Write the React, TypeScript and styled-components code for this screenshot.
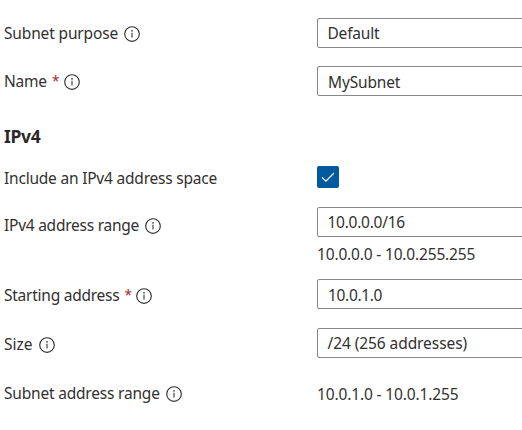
import React from "react";
import styled, { createGlobalStyle } from "styled-components";

const GlobalStyle = createGlobalStyle`
  *, *::before, *::after { box-sizing: border-box; }
  body {
    margin: 0;
    overflow: hidden;
    background: #fff;
    color: #323130;
    font: 15.5px/22px "Segoe UI", "Noto Sans", sans-serif;
  }
`;

const Form = styled.form`
  width: 522px;
  height: 430px;
  padding-top: 18px;
  overflow: hidden;
`;

const Row = styled.div<{ $gap?: number }>`
  display: grid;
  grid-template-columns: 313px 1fr;
  padding-left: 4px;
  margin-bottom: ${(p) => p.$gap ?? 18}px;
`;

const Label = styled.div<{ $height?: number; $drop?: number }>`
  display: flex;
  align-items: center;
  height: ${(p) => p.$height ?? 30}px;
  margin-top: ${(p) => p.$drop ?? 0}px;
  white-space: nowrap;
`;

const Text = styled.span<{ $tracking?: number }>`
  letter-spacing: ${(p) => p.$tracking ?? -0.2}px;
  white-space: nowrap;
`;

const Required = styled.span`
  width: 6px;
  margin-left: 5px;
  font-size: 13.5px;
  color: #a4262c;
`;

const InfoSvg = styled.svg`
  flex: none;
  width: 16px;
  height: 16px;
  margin: 1px 0 0 6px;
`;

const Heading = styled.h3`
  height: 24px;
  margin: -1px 0 18px;
  padding-left: 4px;
  font-size: 17.5px;
  font-weight: 700;
  line-height: 24px;
  letter-spacing: -0.3px;
  color: #292827;
`;

const TextField = styled.div`
  display: flex;
  align-items: center;
  width: 240px;
  height: 30px;
  padding: 1px 0 0 10px;
  border: 1px solid #8a8886;
  border-radius: 2px;
`;

const SelectField = styled(TextField)`
  padding: 0 0 1px 9.5px;
`;

const Note = styled.div`
  height: 24px;
  margin-top: 6px;
  line-height: 23px;
`;

const Value = styled.div`
  padding-top: 2px;
  line-height: 30px;
`;

const Checkbox = styled.div`
  display: grid;
  place-items: center;
  width: 22px;
  height: 22px;
  border-radius: 2px;
  background: #005a9e;
`;

const InfoIcon = () => (
  <InfoSvg viewBox="0 0 16 16" fill="none">
    <circle cx="8" cy="8" r="7.3" stroke="#323130" strokeWidth="1.15" />
    <path d="M8 6.8v4.7" stroke="#323130" strokeWidth="1.1" />
    <circle cx="8" cy="4.9" r="0.8" fill="#323130" />
  </InfoSvg>
);

const App = () => (
  <>
    <GlobalStyle />
    <Form>
      <Row>
        <Label><Text $tracking={-0.15}>Subnet purpose</Text><InfoIcon /></Label>
        <SelectField><Text>Default</Text></SelectField>
      </Row>
      <Row $gap={29}>
        <Label><Text>Name</Text><Required>*</Required><InfoIcon /></Label>
        <TextField><Text $tracking={-0.15}>MySubnet</Text></TextField>
      </Row>
      <Heading>IPv4</Heading>
      <Row $gap={18}>
        <Label $height={22} $drop={1}><Text $tracking={-0.21}>Include an IPv4 address space</Text></Label>
        <Checkbox role="checkbox" aria-checked="true">
          <svg width="14" height="12" viewBox="0 0 14 12" fill="none">
            <path d="M1 6.3 4.9 10.2 13 2" stroke="#fff" strokeWidth="1.2" />
          </svg>
        </Checkbox>
      </Row>
      <Row $gap={12}>
        <Label $drop={3}><Text $tracking={-0.25}>IPv4 address range</Text><InfoIcon /></Label>
        <div>
          <SelectField><Text $tracking={-0.26}>10.0.0.0/16</Text></SelectField>
          <Note><Text $tracking={-0.17}>10.0.0.0 - 10.0.255.255</Text></Note>
        </div>
      </Row>
      <Row $gap={18}>
        <Label $drop={1}><Text $tracking={-0.25}>Starting address</Text><Required>*</Required><InfoIcon /></Label>
        <TextField><Text $tracking={-0.33}>10.0.1.0</Text></TextField>
      </Row>
      <Row>
        <Label $drop={1}><Text $tracking={0}>Size</Text><InfoIcon /></Label>
        <SelectField><Text $tracking={-0.08}>/24 (256 addresses)</Text></SelectField>
      </Row>
      <Row>
        <Label $drop={1}><Text>Subnet address range</Text><InfoIcon /></Label>
        <Value><Text $tracking={-0.14}>10.0.1.0 - 10.0.1.255</Text></Value>
      </Row>
    </Form>
  </>
);

export default App;
